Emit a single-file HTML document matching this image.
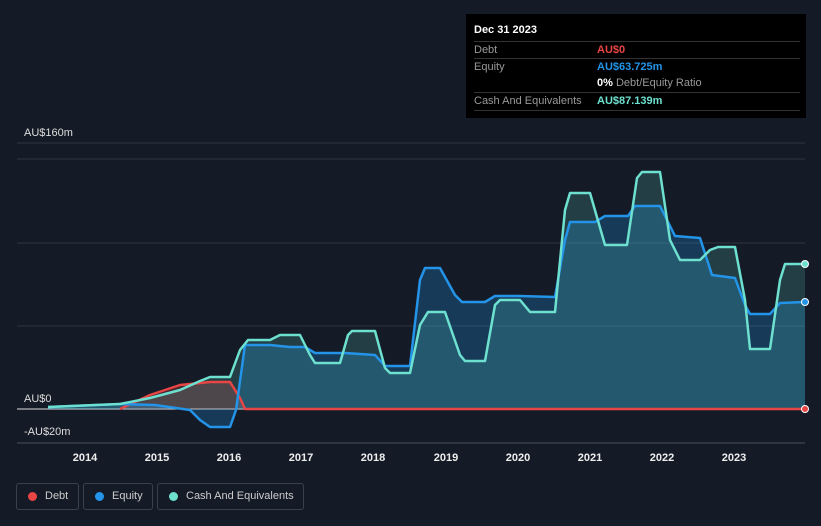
<!DOCTYPE html>
<html><head><style>
html,body{margin:0;background:#151b26;width:821px;height:526px;overflow:hidden;font-family:"Liberation Sans",sans-serif;}
.tt{position:absolute;left:466px;top:14px;width:340px;height:104px;background:#000;color:#fff;font-size:11px;}
.tt .r{position:absolute;left:8px;right:6px;border-top:1px solid #333;height:17px;line-height:17px;color:#999}
.tt .v{position:absolute;left:123px;top:0;font-weight:bold}
.leg{position:absolute;top:483px;height:27px;border:1px solid #3a404c;border-radius:3px;color:#ccc;font-size:11px;line-height:25px;box-sizing:border-box;white-space:nowrap;}
.leg i{position:absolute;left:11px;top:8px;width:9px;height:9px;border-radius:50%}
</style></head><body>
<svg width="821" height="526" style="position:absolute;left:0;top:0">
<g stroke="#2e3440" stroke-width="1">
<line x1="17" y1="143" x2="805" y2="143"/><line x1="17" y1="159" x2="805" y2="159"/>
<line x1="17" y1="243" x2="805" y2="243"/><line x1="17" y1="326" x2="805" y2="326"/>
<line x1="17" y1="443" x2="805" y2="443" stroke="#4a505c"/>
</g>
<line x1="17" y1="409" x2="805" y2="409" stroke="#ddd" stroke-width="1"/>
<g fill="#ddd" font-size="11">
<text x="24" y="136">AU$160m</text><text x="24" y="402">AU$0</text><text x="24" y="435">-AU$20m</text>
</g>
<g fill="#eee" font-size="11" font-weight="bold" text-anchor="middle">
<text x="85" y="461">2014</text><text x="157" y="461">2015</text><text x="229" y="461">2016</text><text x="301" y="461">2017</text><text x="373" y="461">2018</text><text x="446" y="461">2019</text><text x="518" y="461">2020</text><text x="590" y="461">2021</text><text x="662" y="461">2022</text><text x="734" y="461">2023</text>
</g>
<polygon fill="rgba(232,64,64,0.25)" points="120,409 150,395 180,385 210,382 230,382 240,398 245,409"/>
<polygon fill="rgba(33,150,243,0.25)" points="48,409 48,407 120,404 155,405 190,410 200,420 210,427 230,427 236,410 245,345 270,345 290,347 305,347 315,353 345,353 375,355 385,366 410,366 420,280 425,268 440,268 455,295 462,302 485,302 495,296 520,296 555,297 565,240 570,222 595,222 605,216 628,216 635,206 660,206 675,236 700,238 712,275 735,278 745,305 750,314 770,314 780,303 805,302 805,409"/>
<polygon fill="rgba(100,230,210,0.18)" points="48,409 48,407 120,404 150,398 180,390 200,381 210,377 230,377 240,350 248,340 270,340 280,335 300,335 310,355 315,363 340,363 348,335 352,331 375,331 385,368 390,373 410,373 420,325 428,312 445,312 460,355 465,361 485,361 495,305 500,300 520,300 530,312 555,312 565,210 570,193 590,193 605,245 627,245 637,178 642,172 660,172 670,240 680,260 700,260 710,250 718,247 735,247 745,300 750,349 770,349 780,280 785,264 805,264 805,409"/>
<g fill="none" stroke-width="2.5" stroke-linejoin="round">
<polyline stroke="#e84545" points="120,409 150,395 180,385 210,382 230,382 240,398 245,409 805,409"/>
<polyline stroke="#2394e8" points="48,407 120,404 155,405 190,410 200,420 210,427 230,427 236,410 245,345 270,345 290,347 305,347 315,353 345,353 375,355 385,366 410,366 420,280 425,268 440,268 455,295 462,302 485,302 495,296 520,296 555,297 565,240 570,222 595,222 605,216 628,216 635,206 660,206 675,236 700,238 712,275 735,278 745,305 750,314 770,314 780,303 805,302"/>
<polyline stroke="#6de0cf" points="48,407 120,404 150,398 180,390 200,381 210,377 230,377 240,350 248,340 270,340 280,335 300,335 310,355 315,363 340,363 348,335 352,331 375,331 385,368 390,373 410,373 420,325 428,312 445,312 460,355 465,361 485,361 495,305 500,300 520,300 530,312 555,312 565,210 570,193 590,193 605,245 627,245 637,178 642,172 660,172 670,240 680,260 700,260 710,250 718,247 735,247 745,300 750,349 770,349 780,280 785,264 805,264"/>
</g>
<circle cx="805" cy="409" r="3.5" fill="#e84545" stroke="#fff"/>
<circle cx="805" cy="302" r="3.5" fill="#2394e8" stroke="#fff"/>
<circle cx="805" cy="264" r="3.5" fill="#6de0cf" stroke="#fff"/>
</svg>
<div class="tt">
<div style="position:absolute;left:8px;top:10px;font-weight:bold;font-size:11px">Dec 31 2023</div>
<div class="r" style="top:27px">Debt<span class="v" style="color:#e84545">AU$0</span></div>
<div class="r" style="top:44px">Equity<span class="v" style="color:#2394e8">AU$63.725m</span></div>
<div class="r" style="top:61px;border-top:none"><span class="v" style="color:#fff">0% <span style="color:#999;font-weight:normal">Debt/Equity Ratio</span></span></div>
<div class="r" style="top:78px;border-bottom:1px solid #333">Cash And Equivalents<span class="v" style="color:#6de0cf">AU$87.139m</span></div>
</div>
<div class="leg" style="left:16px;width:63px"><i style="background:#e84545"></i><span style="margin-left:28px">Debt</span></div>
<div class="leg" style="left:83px;width:70px"><i style="background:#2394e8"></i><span style="margin-left:28px">Equity</span></div>
<div class="leg" style="left:157px;width:147px"><i style="background:#6de0cf"></i><span style="margin-left:28px">Cash And Equivalents</span></div>
</body></html>
